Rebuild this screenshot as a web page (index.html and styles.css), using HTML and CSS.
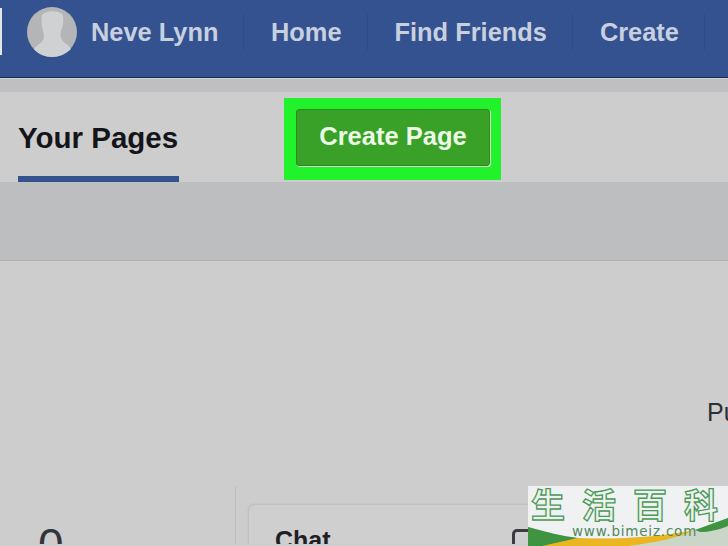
FILE: index.html
```html
<!DOCTYPE html>
<html>
<head>
	<title>Your Pages</title>
	<link rel="stylesheet" href="styles.css">
</head>
<body>
	<nav class="topbar">
		<div class="search-edge"></div>
		<a class="nav-item profile">
			<svg class="avatar" viewBox="0 0 50 50">
				<circle cx="25" cy="25" r="25" fill="#b4b5b7"/>
				<path d="M15 8C19 3 32 3 36 8C37 14 36 20 34 24C33 29 34 33 38 36C41 38 43 40 44 42C39 47 32 50 25 50C18 50 11 47 7 42C9 39 12 37 15 35C17 32 17.500 28 16 24C14.500 19 14 13 15 8Z" fill="#d0d1d2"/>
			</svg>
			<span>Neve Lynn</span>
		</a>
		<a class="nav-item">Home</a>
		<a class="nav-item">Find Friends</a>
		<a class="nav-item">Create</a>
	</nav>
	<div class="strip"></div>
	<div class="tabs">
		<div class="tab">Your Pages</div>
		<div class="highlight">
			<button type="button" class="create-btn">Create Page</button>
		</div>
	</div>
	<div class="band"></div>
	<div class="content">
		<div class="pub">Pu</div>
		<div class="lower">
			<div class="count">0</div>
			<div class="card">
				<h3>Chat</h3>
				<div class="chat-icon"></div>
			</div>
		</div>
	</div>
	<div class="watermark">
		<div class="wm-title">
			<span>生</span><span>活</span><span>百</span><span>科</span>
		</div>
		<div class="wm-url">www.bimeiz.com</div>
		<svg class="wm-swoosh" viewBox="0 0 200 36">
			<path d="M0 17C18 22 34 26 50 28C90 30 130 27 167 20L200 8V36H0Z" fill="#c9d6c8"/>
			<path d="M0 17C18 22 34 26 50 28C40 31 30 34 20 36H0Z" fill="#3e9440"/>
			<path d="M14 36L50 28C90 30 130 27 167 20C150 28 125 33 100 36Z" fill="#ecb621"/>
			<path d="M167 20L200 8V16C190 20 180 22 172 22Z" fill="#3e9440"/>
		</svg>
	</div>
</body>
</html>
```

FILE: styles.css
```css
html, body {
	margin: 0;
	padding: 0;
	overflow: hidden;
}
body {
	width: 728px;
	height: 546px;
	position: relative;
	background-color: #cdcdcd;
	font-family: "Liberation Sans", Arial, sans-serif;
}

/* top nav */
.topbar {
	display: flex;
	align-items: flex-start;
	height: 77px;
	background-color: #34528f;
	border-bottom: 1px solid #14284f;
	box-shadow: 0 1px 0 #d5d6da;
}
.search-edge {
	width: 2px;
	height: 47px;
	margin-top: 8px;
	flex: none;
	background-color: #e4e6ea;
}
.nav-item {
	display: flex;
	align-items: center;
	height: 36px;
	margin-top: 14px;
	padding: 0 25px 0 27px;
	border-right: 1px solid #2f4b85;
	font-size: 25.400px;
	font-weight: bold;
	line-height: 36px;
	color: #c8cfdf;
	white-space: nowrap;
}
.profile {
	width: 242px;
	box-sizing: border-box;
	padding: 0 0 0 25px;
	gap: 14px;
}
.avatar {
	width: 50px;
	height: 50px;
	flex: none;
	margin-top: -1px;
}

.strip {
	height: 13px;
	margin-top: 1px;
	background-color: #bfbfc1;
}

/* tabs row */
.tabs {
	display: flex;
	align-items: flex-start;
	height: 90px;
	padding-left: 18px;
}
.tab {
	width: 161px;
	height: 84px;
	border-bottom: 6px solid #35528f;
	font-size: 29.500px;
	font-weight: bold;
	line-height: 92px;
	white-space: nowrap;
	color: #14151a;
}
.highlight {
	margin: 6px 0 0 105px;
	padding: 11px 11px 11px 12px;
	width: 217px;
	height: 82px;
	box-sizing: border-box;
	background-color: #22f22c;
}
.create-btn {
	display: block;
	width: 194px;
	height: 57px;
	padding: 0 0 2px;
	margin: 0;
	border: 1px solid #2e8a1f;
	border-radius: 3px;
	box-shadow: 1px 1px 0 #d8f5d0;
	background-color: #3aa128;
	font-family: inherit;
	font-size: 25.500px;
	font-weight: bold;
	color: #ecf8e6;
}

.band {
	height: 78px;
	background-color: #bdbebf;
	border-bottom: 1px solid #b0b1b4;
}

/* lower content */
.content {
	display: flex;
	flex-direction: column;
}
.pub {
	margin: 137px 0 0 707px;
	font-size: 25px;
	line-height: 29px;
	color: #2c2f36;
}
.lower {
	display: flex;
	align-items: flex-start;
	height: 58px;
	overflow: hidden;
	margin-top: 59px;
}
.count {
	flex: none;
	width: 236px;
	height: 58px;
	box-sizing: border-box;
	padding: 34px 0 0 38px;
	border-right: 1px solid #bbbcbd;
	font-size: 46px;
	line-height: 50px;
	color: #33353c;
}
.card {
	flex: none;
	display: flex;
	justify-content: space-between;
	box-sizing: border-box;
	width: 479px;
	height: 60px;
	margin: 19px 0 0 13px;
	padding: 21px 0 0 26px;
	border-radius: 6px 0 0 0;
	background-color: #cfcfcf;
	box-shadow: -1px -1px 2px #bcbcbc;
}
.card h3 {
	margin: 0;
	font-size: 25px;
	line-height: 29px;
	color: #1e2026;
}
.chat-icon {
	box-sizing: border-box;
	width: 28px;
	height: 28px;
	margin: 3px 188px 0 0;
	border: 3px solid #3b3d43;
	border-radius: 5px;
}

/* watermark in the corner */
.watermark {
	position: absolute;
	left: 528px;
	top: 486px;
	width: 200px;
	height: 60px;
	overflow: hidden;
	background-color: #f0f1f2;
}
.wm-title {
	display: flex;
	gap: 17px;
	padding-left: 3px;
	font-family: "Noto Sans CJK SC", sans-serif;
	font-size: 34px;
	font-weight: bold;
	line-height: 36px;
	color: #eef2ee;
	-webkit-text-stroke: 1.300px #4a9a58;
}
.wm-url {
	position: relative;
	z-index: 1;
	margin: 1px 0 0 44px;
	font-family: "DejaVu Sans", sans-serif;
	font-size: 13.500px;
	line-height: 16px;
	letter-spacing: 0.800px;
	color: #4e8a5c;
}
.wm-swoosh {
	position: absolute;
	left: 0;
	bottom: 0;
	width: 200px;
	height: 36px;
}
```
